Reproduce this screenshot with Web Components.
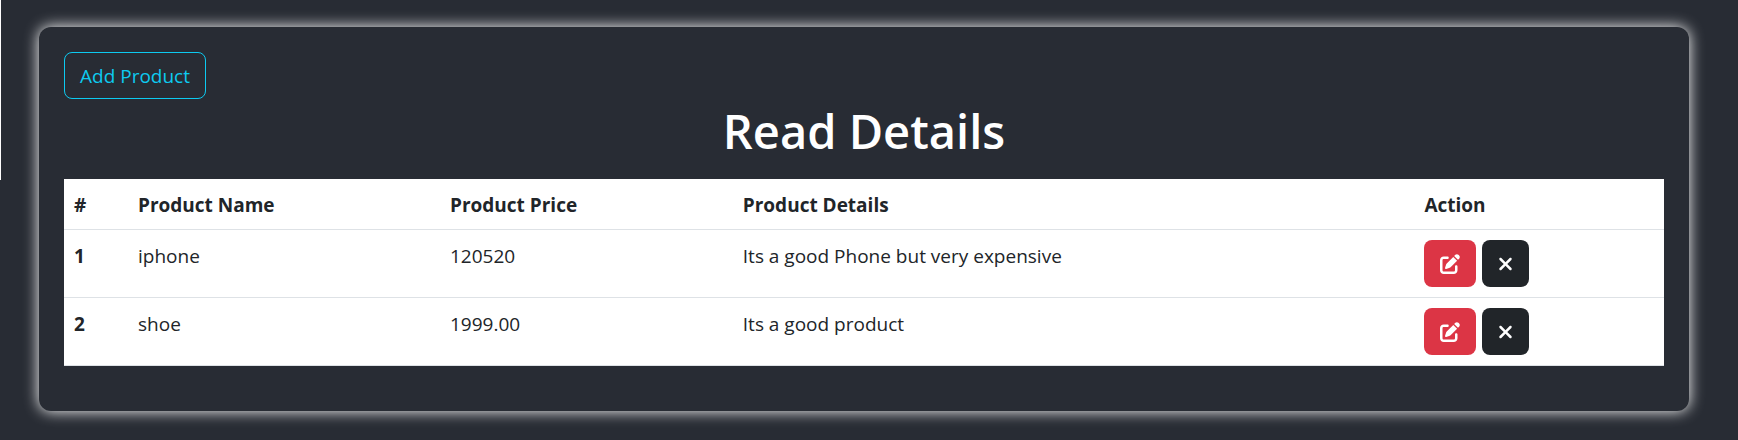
<!DOCTYPE html>
<html lang="en">
<head>
<meta charset="utf-8">
<title>Read Details</title>
<style>
  html { background: #282c34; }
  body {
    margin: 0;
    font-family: "Open Sans", "Noto Sans", sans-serif;
    font-size: 19px;
    line-height: 30px;
    color: #212529;
  }
</style>
</head>
<body>
<product-page></product-page>

<template id="page-template">
  <style>
    :host { display: block; position: relative; padding: 27px 49px 29px 39px; }
    .edge { position: absolute; left: 0; top: 0; width: 1px; height: 180px; background: #fff; }
  </style>
  <div class="edge"></div>
  <glow-card>
    <action-button variant="outline">Add Product</action-button>
    <page-title>Read Details</page-title>
    <product-table></product-table>
  </glow-card>
</template>

<template id="card-template">
  <style>
    :host {
      display: block;
      padding: 25px 25px 45px;
      border-radius: 12px;
      background: #282c34;
      box-shadow: 0 0 15px #fff;
    }
  </style>
  <slot></slot>
</template>

<template id="title-template">
  <style>
    :host { display: block; padding: 2px 0 18px; }
    h1 { margin: 0; font-size: 47px; line-height: 60px; font-weight: 600; text-align: center; color: #fff; }
  </style>
  <h1><slot></slot></h1>
</template>

<template id="button-template">
  <style>
    :host { display: block; width: fit-content; }
    button {
      display: flex;
      align-items: center;
      box-sizing: border-box;
      height: 47px;
      padding: 1px 15px 0;
      border: 1px solid transparent;
      border-radius: 8px;
      font: inherit;
      color: #fff;
      cursor: pointer;
    }
    :host([variant="outline"]) button { background: transparent; border-color: #0dcaf0; color: #0dcaf0; }
    :host([variant="danger"]) button { background: #dc3545; }
    :host([variant="dark"]) button { background: #212529; }
  </style>
  <button type="button"><slot></slot></button>
</template>

<template id="icon-template">
  <style>
    :host { display: block; }
    svg { display: block; height: 20px; width: auto; fill: currentColor; }
  </style>
  <svg aria-hidden="true"><path/></svg>
</template>

<template id="table-template">
  <style>
    :host { display: block; }
    table { width: 100%; border-collapse: separate; border-spacing: 0; table-layout: fixed; background: #fff; }
    th, td { box-sizing: border-box; padding: 11px 10px 9px; text-align: left; vertical-align: top; border-bottom: 1px solid #dee2e6; font-weight: 400; }
    th { font-weight: 700; }
    td.action { padding: 10px; }
    .num { width: 4%; }
    .name { width: 19.5%; }
    .price { width: 18.3%; }
    .details { width: 42.6%; }
    .buttons { display: flex; gap: 6px; }
  </style>
  <table>
    <thead>
      <tr>
        <th class="num" scope="col">#</th>
        <th class="name" scope="col">Product Name</th>
        <th class="price" scope="col">Product Price</th>
        <th class="details" scope="col">Product Details</th>
        <th scope="col">Action</th>
      </tr>
    </thead>
    <tbody></tbody>
  </table>
</template>

<script>
  const ICONS = {
    edit: ['0 0 512 512', 'M471.6 21.7c-21.9-21.9-57.3-21.9-79.2 0L362.3 51.7l97.9 97.9 30.1-30.1c21.9-21.9 21.9-57.3 0-79.2L471.6 21.7zm-299.2 220c-6.1 6.1-10.8 13.6-13.5 21.9l-29.6 88.8c-2.9 8.6-.6 18.1 5.8 24.6s15.9 8.7 24.6 5.8l88.8-29.6c8.2-2.7 15.7-7.4 21.9-13.5L437.7 172.3 339.7 74.3 172.4 241.7zM96 64C43 64 0 107 0 160V416c0 53 43 96 96 96H352c53 0 96-43 96-96V320c0-17.7-14.3-32-32-32s-32 14.3-32 32v96c0 17.7-14.3 32-32 32H96c-17.7 0-32-14.3-32-32V160c0-17.7 14.3-32 32-32h96c17.7 0 32-14.3 32-32s-14.3-32-32-32H96z'],
    close: ['0 0 384 512', 'M342.6 150.6c12.5-12.5 12.5-32.8 0-45.3s-32.8-12.5-45.3 0L192 210.7 86.6 105.4c-12.5-12.5-32.8-12.5-45.3 0s-12.5 32.8 0 45.3L146.7 256 41.4 361.4c-12.5 12.5-12.5 32.8 0 45.3s32.8 12.5 45.3 0L192 301.3 297.4 406.6c12.5 12.5 32.8 12.5 45.3 0s12.5-32.8 0-45.3L237.3 256 342.6 150.6z']
  };

  const PRODUCTS = [
    { name: 'iphone', price: '120520', details: 'Its a good Phone but very expensive' },
    { name: 'shoe', price: '1999.00', details: 'Its a good product' }
  ];

  class TemplateElement extends HTMLElement {
    constructor() {
      super();
      const template = document.getElementById(this.constructor.template);
      this.attachShadow({ mode: 'open' }).append(template.content.cloneNode(true));
    }
  }

  customElements.define('glow-card', class extends TemplateElement {
    static template = 'card-template';
  });

  customElements.define('page-title', class extends TemplateElement {
    static template = 'title-template';
  });

  customElements.define('action-button', class extends TemplateElement {
    static template = 'button-template';
    connectedCallback() {
      const label = this.getAttribute('label');
      if (label) this.shadowRoot.querySelector('button').setAttribute('aria-label', label);
    }
  });

  customElements.define('glyph-icon', class extends TemplateElement {
    static template = 'icon-template';
    connectedCallback() {
      const [box, path] = ICONS[this.getAttribute('name')];
      this.shadowRoot.querySelector('svg').setAttribute('viewBox', box);
      this.shadowRoot.querySelector('path').setAttribute('d', path);
    }
  });

  customElements.define('product-table', class extends TemplateElement {
    static template = 'table-template';
    connectedCallback() {
      this.shadowRoot.querySelector('tbody').innerHTML = PRODUCTS.map((p, i) => `
        <tr>
          <th scope="row">${i + 1}</th>
          <td>${p.name}</td>
          <td>${p.price}</td>
          <td>${p.details}</td>
          <td class="action"><div class="buttons">
            <action-button variant="danger" label="Edit ${p.name}"><glyph-icon name="edit"></glyph-icon></action-button>
            <action-button variant="dark" label="Delete ${p.name}"><glyph-icon name="close"></glyph-icon></action-button>
          </div></td>
        </tr>`).join('');
    }
  });

  customElements.define('product-page', class extends TemplateElement {
    static template = 'page-template';
  });
</script>
</body>
</html>
